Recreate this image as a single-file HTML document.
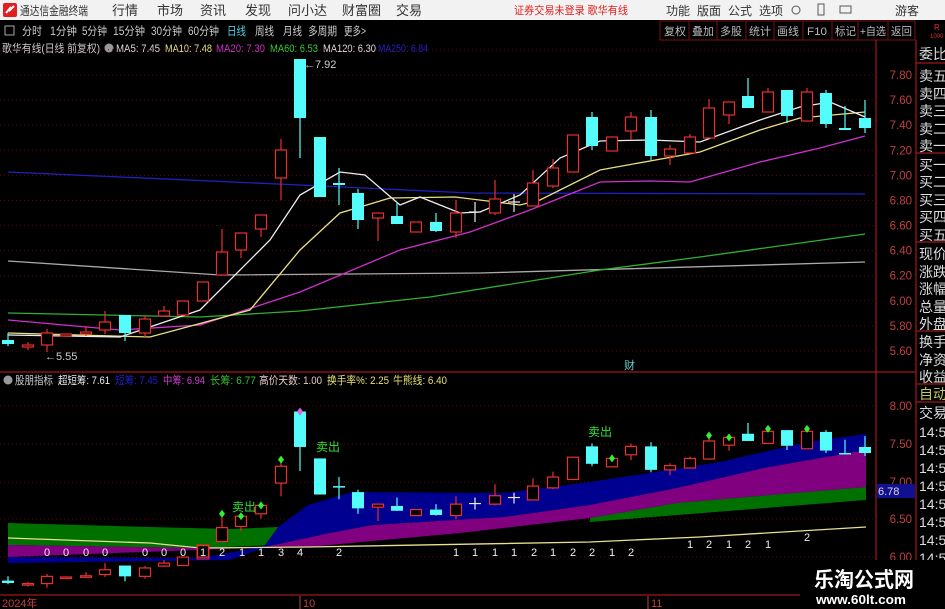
<!DOCTYPE html>
<html><head><meta charset="utf-8"><style>
html,body{margin:0;padding:0;background:#000;width:945px;height:609px;overflow:hidden}
svg{display:block}
text{font-family:"Liberation Sans","Noto Sans CJK SC",sans-serif}
</style></head><body>
<svg id="s" width="945" height="609" viewBox="0 0 945 609" xmlns="http://www.w3.org/2000/svg">
<rect width="945" height="609" fill="#000"/>
<!-- top bar -->
<rect x="0" y="0" width="945" height="20" fill="#f2f2f2"/>
<rect x="3" y="3" width="14" height="14" rx="2" fill="#e02020"/>
<path d="M6 13 L11 7 L9 11 L14 6" stroke="#fff" stroke-width="2" fill="none"/>
<g font-size="13" fill="#333" lengthAdjust="spacingAndGlyphs">
<text x="20" y="15" font-size="12" textLength="68" lengthAdjust="spacingAndGlyphs">通达信金融终端</text>
<text x="112" y="15">行情</text><text x="157" y="15">市场</text><text x="200" y="15">资讯</text>
<text x="245" y="15">发现</text><text x="288" y="15">问小达</text><text x="342" y="15">财富圈</text>
<text x="396" y="15">交易</text>
<text x="514" y="14" fill="#e02020" font-size="11" textLength="114" lengthAdjust="spacingAndGlyphs">证券交易未登录  歌华有线</text>
<text x="666" y="15" font-size="12">功能</text><text x="697" y="15" font-size="12">版面</text><text x="728" y="15" font-size="12">公式</text><text x="759" y="15" font-size="12">选项</text>
<text x="895" y="15" font-size="12">游客</text>
</g>
<circle cx="796" cy="10" r="4" fill="none" stroke="#555"/>
<rect x="818" y="4" width="6" height="11" fill="none" stroke="#555"/>
<rect x="840" y="6" width="11" height="7" fill="none" stroke="#555"/>
<!-- second bar -->
<rect x="0" y="20" width="945" height="20" fill="#000"/>
<rect x="5" y="26" width="9" height="9" fill="none" stroke="#aaa"/>
<g id="tabs" font-size="11.5" fill="#ccc"></g>
<g stroke="#7a1010" fill="none">
<rect x="660" y="21" width="255" height="19"/>
<path d="M689 21v19M717 21v19M746 21v19M774 21v19M803 21v19M832 21v19M858 21v19M888 21v19"/>
</g>
<g id="btns" font-size="11" fill="#bbb"></g>
<text x="934" y="30" font-size="8" fill="#e03030">R</text><text x="930" y="38" font-size="6" fill="#e03030">1000</text>
<!-- legend -->
<g id="leg" font-size="11"></g>
<circle cx="109" cy="48" r="4.5" fill="#999"/>
<g id="grid"></g>
<!-- frame lines -->
<g stroke="#a01818" stroke-width="1.2">
<path d="M876 40V595M916 40V609M0 372H916M0 595H916"/>
<path d="M916 63H945M916 153H945M916 242H945M916 331H945M916 384H945M916 402H945"/>
</g>
<!-- lower pane bands -->
<polygon fill="#007000" points="8,523 150,527 230,529 278,527 278,545 200,548 8,545"/>
<polygon fill="#800080" points="8,545 200,548 250,548 8,557"/>
<polygon fill="#000090" points="8,557 200,558 250,549 265,545 278,527 308,505 352,492 504,493 590,482 720,462 807,442 866,434 866,450 764,468 677,488 590,505 504,517 373,525 330,533 265,547 230,560 8,563"/>
<polygon fill="#800080" points="265,547 330,533 373,525 504,517 590,505 677,488 764,468 866,450 866,487 677,503 590,518 460,533 308,547"/>
<polygon fill="#007000" points="590,518 677,503 866,487 866,500 590,522"/>
<polyline fill="none" stroke="#e8e090" stroke-width="1.3" points="8,538 150,543 200,548 308,547 590,542 700,537 866,527"/>
<!-- main MAs -->
<g fill="none" stroke-width="1.3">
<polyline stroke="#2020c0" points="8,172 300,185 470,193 865,194"/>
<polyline stroke="#aaa" points="8,261 220,275 480,273 865,262"/>
<polyline stroke="#30b030" points="8,313 200,317 300,311 430,297 600,270 700,257 865,234"/>
<polyline stroke="#d030d0" points="8,320 120,330 200,325 300,292 400,250 470,232 530,210 600,182 650,181 690,182 760,162 820,148 865,136"/>
<polyline stroke="#e8e080" points="8,333 150,337 250,310 300,250 340,213 390,198 455,197 520,205 540,200 600,170 700,152 760,130 800,118 865,112"/>
<polyline stroke="#eee" points="8,335 120,337 200,310 270,240 300,195 340,172 365,175 400,205 420,197 460,213 480,212 520,195 560,158 600,141 650,140 700,142 760,120 800,107 830,102 865,117"/>
</g>
<g id="cd"></g>
<text x="304" y="68" font-size="11" fill="#ccc">←7.92</text>
<text x="45" y="360" font-size="11" fill="#ccc">←5.55</text>
<text x="624" y="369" font-size="11" fill="#6cc">财</text>
<!-- indicator legend -->
<circle cx="8" cy="380" r="4.5" fill="#999"/>
<g id="ind" font-size="11"></g>
<g font-size="12" fill="#30e030">
<text x="232" y="511">卖出</text><text x="316" y="451">卖出</text><text x="588" y="436">卖出</text>
</g>
<g id="nums" font-size="11" fill="#eee"></g>
<g id="ax" font-size="11.5" fill="#c04040" text-anchor="end"></g>
<rect x="877" y="484" width="38" height="14" fill="#101090"/>
<text x="878" y="495" font-size="11" fill="#ddd">6.78</text>
<g id="rp" font-size="14" fill="#ddd"></g>
<g font-size="11" fill="#c04040">
<text x="2" y="607">2024年</text><text x="303" y="607">10</text><text x="651" y="607">11</text>
<path d="M300 596v13M648 596v13" stroke="#c04040"/>
</g>
<rect x="800" y="560" width="145" height="49" fill="#000"/>
<text x="814" y="587" font-size="21" font-weight="bold" fill="#fff" textLength="100" lengthAdjust="spacingAndGlyphs">乐淘公式网</text>
<text x="816" y="604" font-size="13" font-weight="bold" fill="#fff" font-family="Liberation Serif,serif" textLength="90" lengthAdjust="spacingAndGlyphs">www.60lt.com</text>
</svg>
<script>
var NS="http://www.w3.org/2000/svg";
function el(p,t,a,tx){var e=document.createElementNS(NS,t);for(var k in a)e.setAttribute(k,a[k]);if(tx)e.textContent=tx;p.appendChild(e);return e;}
function T(p,x,y,w,s,col){var a={x:x,y:y,textLength:w,lengthAdjust:'spacingAndGlyphs'};if(col)a.fill=col;el(p,'text',a,s);}
var tb=document.getElementById('tabs');
[[22,20,'分时'],[50,27,'1分钟'],[82,25,'5分钟'],[113,32,'15分钟'],[151,31,'30分钟'],[188,31,'60分钟'],[227,19,'日线','#4fd0e0'],[255,19,'周线'],[283,19,'月线'],[308,29,'多周期'],[344,22,'更多>']].forEach(function(a){T(tb,a[0],35,a[1],a[2],a[3]);});
var bt=document.getElementById('btns');
[[664,'复权'],[692,'叠加'],[720,'多股'],[749,'统计'],[777,'画线']].forEach(function(a){T(bt,a[0],35,22,a[1]);});
T(bt,807,35,20,'F10');T(bt,835,35,21,'标记');T(bt,860,35,26,'+自选');T(bt,891,35,21,'返回');
var lg=document.getElementById('leg');
T(lg,2,52,98,'歌华有线(日线 前复权)','#ccc');T(lg,116,52,44,'MA5: 7.45','#ddd');T(lg,165,52,47,'MA10: 7.48','#e8e080');
T(lg,216,52,49,'MA20: 7.30','#d030d0');T(lg,270,52,48,'MA60: 6.53','#30d030');T(lg,323,52,53,'MA120: 6.30','#ddd');T(lg,378,52,50,'MA250: 6.84','#2020c8');
var ind=document.getElementById('ind');
T(ind,15,384,38,'股朋指标','#ccc');T(ind,58,384,52,'超短筹: 7.61','#eee');T(ind,115,384,43,'短筹: 7.45','#2020c8');
T(ind,163,384,42,'中筹: 6.94','#d040d0');T(ind,210,384,46,'长筹: 6.77','#30c030');T(ind,259,384,63,'高价天数: 1.00','#e8c8c8');
T(ind,327,384,62,'换手率%: 2.25','#e8e070');T(ind,393,384,54,'牛熊线: 6.40','#e8e070');
var g=document.getElementById('grid');
for(var k=-1;k<12;k++){var y=75+25.09*k;el(g,'line',{x1:0,x2:876,y1:y,y2:y,stroke:'#600',"stroke-dasharray":"1,3"});}
[406,444,482,519,557].forEach(function(y){el(g,'line',{x1:0,x2:876,y1:y,y2:y,stroke:'#600',"stroke-dasharray":"1,3"});});
var ax=document.getElementById('ax');
['7.80','7.60','7.40','7.20','7.00','6.80','6.60','6.40','6.20','6.00','5.80','5.60'].forEach(function(v,i){el(ax,'text',{x:912,y:79+25.09*i},v);});
['8.00','7.50','7.00','6.50','6.00'].forEach(function(v,i){el(ax,'text',{x:912,y:[410,448,486,523,561][i]},v);});
var rp=document.getElementById('rp');
[['委比',59],['卖五',81],['卖四',99],['卖三',116],['卖二',134],['卖一',151],['买一',170],['买二',187],['买三',205],['买四',222],['买五',240],['现价',259],['涨跌',277],['涨幅',294],['总量',312],['外盘',329],['换手',347],['净资',365],['收益',382],['交易',418]].forEach(function(a){el(rp,'text',{x:919,y:a[1]},a[0]);});
el(rp,'text',{x:919,y:399,fill:'#c8c860'},'自动');
for(var i=0;i<9;i++)el(rp,'text',{x:919,y:437+18*i},'14:56');
var C=[[8,340,344,333,346,'c'],[28,345,347,342,350,'r'],[47,333,345,329,352,'r'],[66,334,336,334,336,'r'],[86,332,334,326,336,'r'],[105,322,330,311,334,'r'],[125,315,333,315,341,'c'],[145,319,333,316,337,'r'],[164,311,316,306,317,'r'],[183,301,315,301,315,'r'],[203,282,301,282,301,'r'],[222,252,275,229,275,'r'],[241,233,250,233,258,'r'],[261,215,229,215,237,'r'],[281,150,178,139,200,'r'],[300,59,118,59,158,'c'],[320,137,197,137,197,'c'],[339,183,185,168,205,'c'],[358,193,220,189,229,'c'],[378,213,218,213,241,'r'],[397,216,224,202,224,'c'],[416,222,232,222,232,'r'],[436,222,231,213,232,'c'],[456,213,232,200,238,'r'],[475,212,212,202,222,'x'],[495,199,213,180,215,'r'],[514,202,202,194,212,'x'],[533,183,206,170,206,'r'],[553,168,186,159,188,'r'],[573,135,172,135,172,'r'],[592,117,146,112,150,'c'],[612,137,151,137,151,'r'],[631,117,131,112,140,'r'],[651,117,156,110,160,'c'],[670,149,156,145,165,'r'],[690,137,153,134,153,'r'],[709,108,138,99,138,'r'],[729,102,115,102,124,'r'],[748,96,108,78,108,'c'],[768,92,112,88,112,'r'],[787,90,116,90,123,'c'],[807,92,121,88,121,'r'],[826,93,124,90,128,'c'],[845,128,130,106,130,'c'],[865,118,128,100,133,'c']];
var cd=document.getElementById('cd');
function draw(f){C.forEach(function(c){var x=c[0],bt=f(c[1]),bb=f(c[2]),wt=f(c[3]),wb=f(c[4]),t=c[5];
var col=t=='c'?'#54fcfc':(t=='x'?'#eee':'#e83030');
el(cd,'line',{x1:x,x2:x,y1:wt,y2:wb,stroke:col,"stroke-width":1.2});
if(t=='x'){el(cd,'line',{x1:x-6,x2:x+6,y1:bt,y2:bt,stroke:col,"stroke-width":1.2});return;}
var h=Math.max(bb-bt,1.5);
if(t=='c')el(cd,'rect',{x:x-6,y:bt,width:12,height:h,fill:col});
else el(cd,'rect',{x:x-5.5,y:bt,width:11,height:h,fill:'#000',stroke:col,"stroke-width":1.2});});}
draw(function(y){return y;});
draw(function(y){return 421.1+(y-75)*0.6018;});
[[222,'g'],[241,'g'],[261,'g'],[281,'g'],[300,'m'],[709,'g'],[729,'g'],[768,'g'],[807,'g'],[612,'g']].forEach(function(d){
var c=C.filter(function(q){return q[0]==d[0];})[0];var y=421.1+(c[3]-75)*0.6018;
el(cd,'path',{d:'M'+d[0]+' '+(y-4)+'l3 4l-3 4l-3 -4z',fill:d[1]=='g'?'#30f030':'#e060e0'});});
var nm=document.getElementById('nums');
[[47,'0'],[66,'0'],[86,'0'],[105,'0'],[145,'0'],[164,'0'],[183,'0'],[203,'1'],[222,'2'],[242,'1'],[261,'1'],[281,'3'],[300,'4'],[339,'2'],[456,'1'],[475,'1'],[495,'1'],[514,'1'],[534,'2'],[553,'1'],[573,'2'],[592,'2'],[612,'1'],[631,'2']].forEach(function(n){el(nm,'text',{x:n[0]-3,y:556},n[1]);});
[[690,'1'],[709,'2'],[729,'1'],[748,'2'],[768,'1']].forEach(function(n){el(nm,'text',{x:n[0]-3,y:548},n[1]);});
el(nm,'text',{x:804,y:541},'2');
el(cd,'rect',{x:197,y:545,width:12,height:14,fill:'none',stroke:'#e83030'});
</script>
</body></html>
